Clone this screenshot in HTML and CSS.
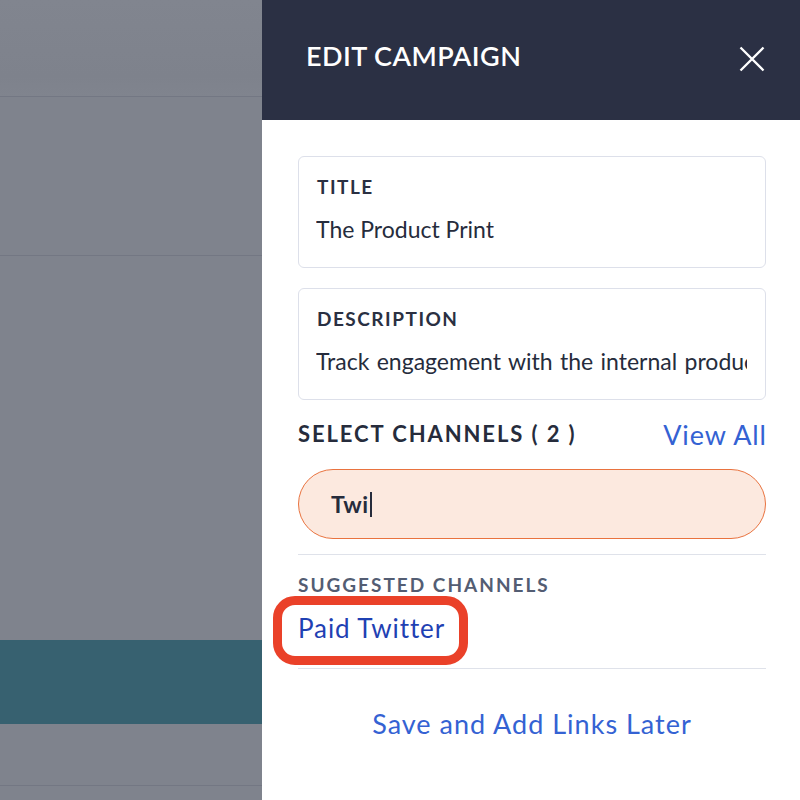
FILE: index.html
```html
<!DOCTYPE html>
<html lang="en">
<head>
<meta charset="utf-8">
<title>Edit Campaign</title>
<link rel="stylesheet" href="styles.css">
</head>
<body>
<div class="screen">
  <div class="backdrop">
    <div class="bd-row bd-top"></div>
    <div class="bd-row bd-r2"></div>
    <div class="bd-row bd-r3"></div>
    <div class="bd-row bd-teal"></div>
    <div class="bd-row bd-r5"></div>
    <div class="bd-row bd-r6"></div>
  </div>
  <aside class="panel">
    <header class="panel-head">
      <h1 class="panel-title">EDIT CAMPAIGN</h1>
      <svg class="close" width="26" height="26" viewBox="0 0 26 26" aria-label="Close">
        <path d="M1.5 1.5 L24.5 24.5 M24.5 1.5 L1.5 24.5" stroke="#ffffff" stroke-width="2.3" fill="none"/>
      </svg>
    </header>
    <div class="panel-body">
      <div class="field">
        <div class="field-label">TITLE</div>
        <div class="field-value">The Product Print</div>
      </div>
      <div class="field field-2">
        <div class="field-label">DESCRIPTION</div>
        <div class="field-value field-desc">Track engagement with the internal product newsletter</div>
      </div>
      <div class="channels-head">
        <span class="channels-title">SELECT CHANNELS ( 2 )</span>
        <span class="view-all">View All</span>
      </div>
      <div class="search">
        <span class="search-text">Twi</span><span class="caret"></span>
      </div>
      <div class="divider d1"></div>
      <div class="suggest-label">SUGGESTED CHANNELS</div>
      <div class="suggest-list">
        <span class="suggest-item">Paid Twitter<span class="highlight"></span></span>
      </div>
      <div class="divider d2"></div>
      <div class="save-later">Save and Add Links Later</div>
    </div>
  </aside>
</div>
</body>
</html>
```
FILE: styles.css
```css
* { box-sizing: border-box; }
html, body { margin: 0; padding: 0; }
body {
  width: 800px;
  height: 800px;
  overflow: hidden;
  font-family: "Lato", "Noto Sans", sans-serif;
  color: #262c3c;
}
.screen {
  display: flex;
  width: 800px;
  height: 800px;
}
.backdrop {
  width: 262px;
  flex: none;
  display: flex;
  flex-direction: column;
  background: #7f838d;
}
.bd-row { border-bottom: 1px solid #737783; }
.bd-top { height: 97px; background: linear-gradient(#81858f, #7e828c 80%, #80848e); }
.bd-r2 { height: 159px; }
.bd-r3 { height: 384px; border-bottom: none; }
.bd-teal { height: 84px; background: #376170; border-bottom: none; }
.bd-r5 { height: 62px; }
.bd-r6 { flex: 1; border-bottom: none; }

.panel {
  width: 538px;
  min-width: 0;
  flex: none;
  background: #ffffff;
  display: flex;
  flex-direction: column;
}
.panel-head {
  height: 120px;
  flex: none;
  background: #2b3044;
  display: flex;
  justify-content: space-between;
  align-items: flex-start;
  padding: 39px 36px 0 44px;
}
.panel-title {
  margin: 0;
  font-size: 27px;
  line-height: 34px;
  font-weight: 600;
  color: #ffffff;
  letter-spacing: 0.45px;
}
.close { margin-top: 7px; margin-right: -1px; }

.panel-body {
  min-width: 0;
  padding: 36px 34px 0 36px;
  display: flex;
  flex-direction: column;
}
.field {
  height: 112px;
  min-width: 0;
  border: 1px solid #dde0ea;
  border-radius: 6px;
  padding: 18px 18px 0 17px;
  overflow: hidden;
}
.field-2 { margin-top: 20px; }
.field-label {
  font-size: 19px;
  line-height: 24px;
  font-weight: 700;
  letter-spacing: 1.5px;
  padding-left: 1px;
  color: #2a3042;
}
.field-value {
  margin-top: 17px;
  font-size: 23px;
  line-height: 26px;
  color: #262c3c;
  white-space: nowrap;
  overflow: hidden;
}
.field-desc { word-spacing: 1.5px; }
.channels-head {
  margin-top: 21px;
  display: flex;
  justify-content: space-between;
  align-items: flex-start;
}
.channels-title {
  font-size: 22px;
  line-height: 26px;
  font-weight: 700;
  letter-spacing: 1.9px;
  color: #262c3c;
}
.view-all {
  margin-top: 1px;
  margin-right: -0.9px;
  font-size: 27px;
  line-height: 26px;
  letter-spacing: 0.9px;
  color: #3462d3;
}
.search {
  margin-top: 21px;
  height: 70px;
  border-radius: 35px;
  border: 1px solid #e9733f;
  background: #fce9df;
  display: flex;
  align-items: center;
  padding-left: 32px;
}
.search-text {
  font-size: 23px;
  font-weight: 700;
  letter-spacing: 0.5px;
  color: #262c3c;
}
.caret {
  width: 2px;
  height: 25px;
  background: #262c3c;
  margin-left: 1px;
}
.divider { height: 1px; background: #dfe2ea; }
.d1 { margin-top: 15px; }
.suggest-label {
  margin-top: 19px;
  font-size: 19px;
  line-height: 22px;
  font-weight: 700;
  letter-spacing: 2px;
  color: #535d73;
}
.suggest-list {
  margin-top: 17px;
  height: 30px;
}
.suggest-item {
  position: relative;
  display: inline-block;
  font-size: 26px;
  line-height: 30px;
  letter-spacing: 0.9px;
  color: #1f41b3;
}
.highlight {
  position: absolute;
  top: -17px;
  bottom: -22px;
  left: -25px;
  right: -23px;
  border: 9px solid #ea4129;
  border-radius: 22px;
}
.d2 { margin-top: 25px; }
.save-later {
  margin-top: 40px;
  text-align: center;
  font-size: 27px;
  line-height: 30px;
  letter-spacing: 1px;
  color: #3462d3;
}
```
